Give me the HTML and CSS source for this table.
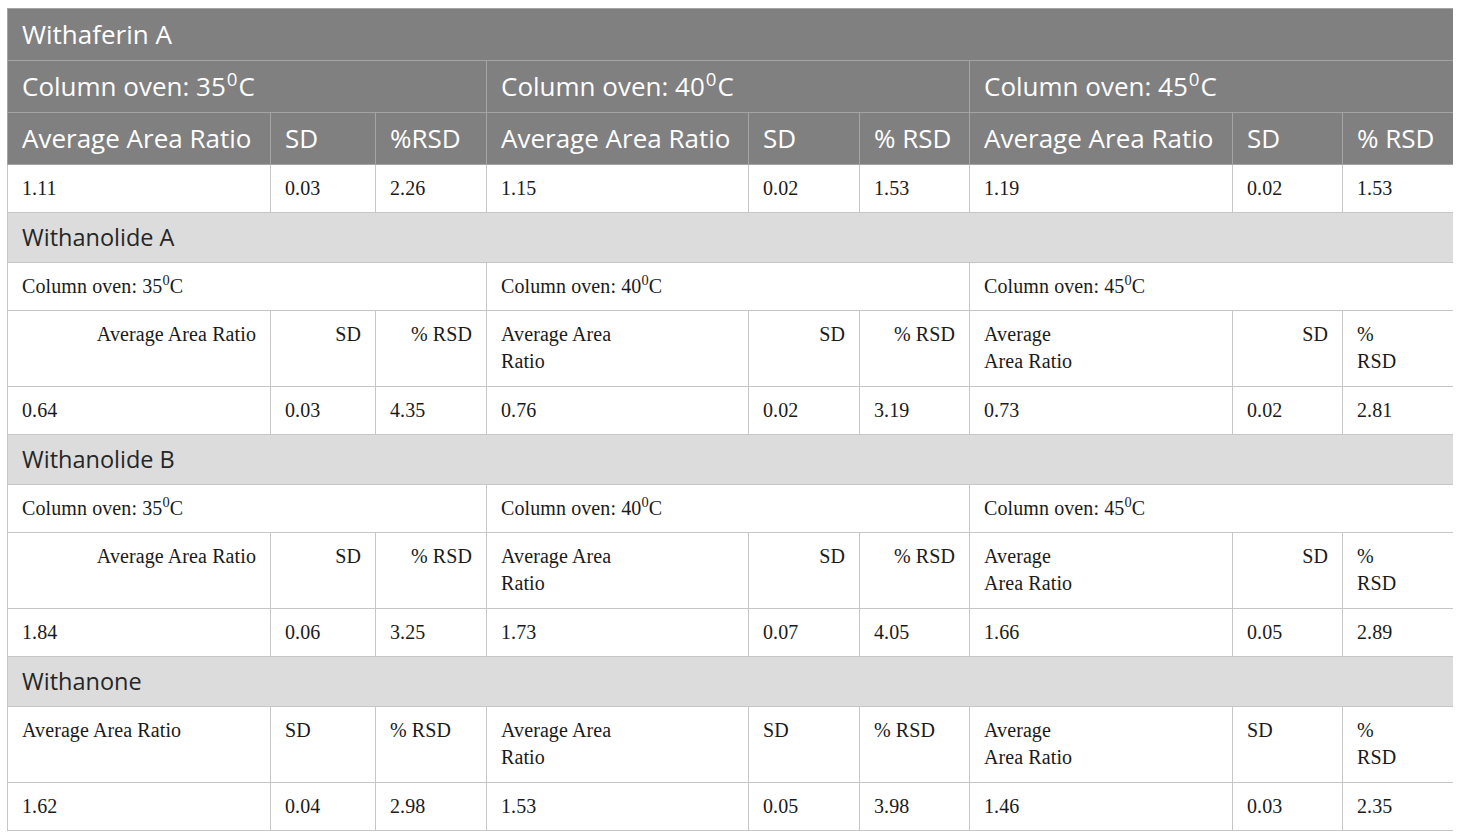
FILE: index.html
```html
<!DOCTYPE html>
<html>
<head>
<meta charset="utf-8">
<link rel="stylesheet" href="styles.css">
</head>
<body>
<table class="data">
<colgroup>
<col style="width:263px"><col style="width:105px"><col style="width:111px">
<col style="width:262px"><col style="width:111px"><col style="width:110px">
<col style="width:263px"><col style="width:110px"><col style="width:111px">
</colgroup>
<thead>
<tr class="hd"><th colspan="9">Withaferin A</th></tr>
<tr class="hd"><th colspan="3">Column oven: 35<sup>0</sup>C</th><th colspan="3">Column oven: 40<sup>0</sup>C</th><th colspan="3">Column oven: 45<sup>0</sup>C</th></tr>
<tr class="hd"><th>Average Area Ratio</th><th>SD</th><th>%RSD</th><th>Average Area Ratio</th><th>SD</th><th>% RSD</th><th>Average Area Ratio</th><th>SD</th><th>% RSD</th></tr>
</thead>
<tbody>
<tr><td>1.11</td><td>0.03</td><td>2.26</td><td>1.15</td><td>0.02</td><td>1.53</td><td>1.19</td><td>0.02</td><td>1.53</td></tr>
<tr class="sec"><td colspan="9">Withanolide A</td></tr>
<tr><td colspan="3">Column oven: 35<sup>0</sup>C</td><td colspan="3">Column oven: 40<sup>0</sup>C</td><td colspan="3">Column oven: 45<sup>0</sup>C</td></tr>
<tr class="tall"><td class="r">Average Area Ratio</td><td class="r">SD</td><td class="r">% RSD</td><td>Average Area<br>Ratio</td><td class="r">SD</td><td class="r">% RSD</td><td>Average<br>Area Ratio</td><td class="r">SD</td><td>%<br>RSD</td></tr>
<tr><td>0.64</td><td>0.03</td><td>4.35</td><td>0.76</td><td>0.02</td><td>3.19</td><td>0.73</td><td>0.02</td><td>2.81</td></tr>
<tr class="sec"><td colspan="9">Withanolide B</td></tr>
<tr><td colspan="3">Column oven: 35<sup>0</sup>C</td><td colspan="3">Column oven: 40<sup>0</sup>C</td><td colspan="3">Column oven: 45<sup>0</sup>C</td></tr>
<tr class="tall"><td class="r">Average Area Ratio</td><td class="r">SD</td><td class="r">% RSD</td><td>Average Area<br>Ratio</td><td class="r">SD</td><td class="r">% RSD</td><td>Average<br>Area Ratio</td><td class="r">SD</td><td>%<br>RSD</td></tr>
<tr><td>1.84</td><td>0.06</td><td>3.25</td><td>1.73</td><td>0.07</td><td>4.05</td><td>1.66</td><td>0.05</td><td>2.89</td></tr>
<tr class="sec"><td colspan="9">Withanone</td></tr>
<tr class="tall"><td>Average Area Ratio</td><td>SD</td><td>% RSD</td><td>Average Area<br>Ratio</td><td>SD</td><td>% RSD</td><td>Average<br>Area Ratio</td><td>SD</td><td>%<br>RSD</td></tr>
<tr><td>1.62</td><td>0.04</td><td>2.98</td><td>1.53</td><td>0.05</td><td>3.98</td><td>1.46</td><td>0.03</td><td>2.35</td></tr>
</tbody>
</table>
</body>
</html>
```
FILE: styles.css
```css
html, body {
  background: #ffffff;
}
body {
  margin: 8px 7px;
}
.data {
  border-collapse: collapse;
  table-layout: fixed;
  width: 1446px;
  border: 1px solid #c6c6c6;
}
.data th, .data td {
  border: 1px solid #c6c6c6;
  text-align: left;
  vertical-align: top;
}
.data th {
  background: #7f807f;
  color: #ffffff;
  font-family: "Open Sans", "Noto Sans", sans-serif;
  font-weight: 400;
  font-size: 26px;
  line-height: 31px;
  padding: 10px 14px 10px 14px;
  border-color: #a4a4a4;
}
.data th sup {
  margin: 0 1px;
}
.data td {
  font-family: "Liberation Serif", "Times New Roman", serif;
  font-size: 20px;
  letter-spacing: 0.1px;
  line-height: 27px;
  padding: 10px 14px 10px 14px;
  color: #1a1a1a;
}
.data tr.tall td {
  padding-bottom: 11px;
}
.data td.r {
  text-align: right;
}
.data tr.sec td {
  background: #dcdcdc;
  font-family: "Open Sans", "Noto Sans", sans-serif;
  font-size: 23.5px;
  letter-spacing: 0;
  line-height: 29px;
  color: #262626;
}
sup {
  font-size: 0.72em;
  line-height: 0;
  vertical-align: 0.55em;
}
```
